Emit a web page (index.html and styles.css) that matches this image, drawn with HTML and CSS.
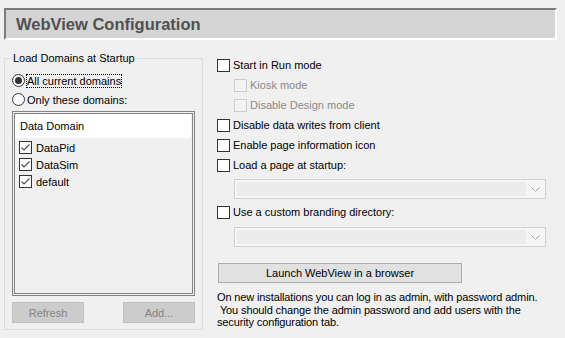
FILE: index.html
```html
<!DOCTYPE html>
<html lang="en">
<head>
    <meta charset="UTF-8">
    <title>WebView Configuration</title>
    <link rel="stylesheet" href="styles.css">
</head>
<body>
    <!-- Title bar -->
    <div class="header">WebView Configuration</div>

    <div class="content">
        <!-- Domains group -->
        <fieldset class="domains">
            <legend>Load Domains at Startup</legend>
            <div class="radio-row">
                <span class="radio checked"></span>
                <span class="focus">All current domains</span>
            </div>
            <div class="radio-row">
                <span class="radio"></span>
                <span>Only these domains:</span>
            </div>
            <div class="domain-list">
                <div class="list-head">Data Domain</div>
                <div class="list-items">
                    <div class="list-item"><span class="check checked"></span>DataPid</div>
                    <div class="list-item"><span class="check checked"></span>DataSim</div>
                    <div class="list-item"><span class="check checked"></span>default</div>
                </div>
            </div>
            <div class="group-buttons">
                <button class="btn-disabled">Refresh</button>
                <button class="btn-disabled">Add...</button>
            </div>
        </fieldset>

        <!-- Options -->
        <div class="options">
            <div class="opt"><span class="check"></span>Start in Run mode</div>
            <div class="opt sub disabled"><span class="check"></span>Kiosk mode</div>
            <div class="opt sub disabled"><span class="check"></span>Disable Design mode</div>
            <div class="opt"><span class="check"></span>Disable data writes from client</div>
            <div class="opt"><span class="check"></span>Enable page information icon</div>
            <div class="opt"><span class="check"></span>Load a page at startup:</div>
            <div class="combo combo-page">
                <span class="combo-field"></span>
                <span class="combo-arrow">
                    <svg width="9" height="5" viewBox="0 0 9 5"><polyline points="0.5,0.5 4.5,4.5 8.5,0.5" fill="none" stroke="#a8a8a8" stroke-width="1"/></svg>
                </span>
            </div>
            <div class="opt opt-brand"><span class="check"></span>Use a custom branding directory:</div>
            <div class="combo combo-brand">
                <span class="combo-field"></span>
                <span class="combo-arrow">
                    <svg width="9" height="5" viewBox="0 0 9 5"><polyline points="0.5,0.5 4.5,4.5 8.5,0.5" fill="none" stroke="#a8a8a8" stroke-width="1"/></svg>
                </span>
            </div>
            <button class="launch">Launch WebView in a browser</button>
            <p class="note">On new installations you can log in as admin, with password admin.<br>&nbsp;You should change the admin password and add users with the<br>security configuration tab.</p>
        </div>
    </div>
</body>
</html>
```

FILE: styles.css
```css
body {
    margin: 0;
    padding: 8px 8px 0 4px;
    background-color: #f0f0f0;
    font-family: "Liberation Sans", Arial, sans-serif;
    font-size: 11px;
    color: #000;
}

/* Title bar */
.header {
    width: 539px;
    height: 28px;
    line-height: 28px;
    padding-left: 10px;
    background-color: #d4d4d4;
    border-top: 2px solid #7c7c7c;
    border-left: 2px solid #7c7c7c;
    border-bottom: 2px solid #fff;
    border-right: 2px solid #fff;
    font-size: 16.5px;
    font-weight: bold;
    color: #505050;
}

.content {
    display: flex;
    align-items: flex-start;
    margin-top: 12px;
}

/* Domains group */
.domains {
    box-sizing: border-box;
    width: 199px;
    margin: 0;
    padding: 6px 7px 6px 7px;
    border: 1px solid #dcdcdc;
}

.domains legend {
    padding: 0 2px;
    margin-left: -1px;
    line-height: 13px;
}

.radio-row {
    display: flex;
    align-items: center;
    height: 19px;
    gap: 2px;
}

.radio {
    box-sizing: border-box;
    width: 13px;
    height: 13px;
    border: 1px solid #333;
    border-radius: 50%;
    background-color: #fff;
    display: flex;
    align-items: center;
    justify-content: center;
}

.radio.checked::after {
    content: "";
    width: 7px;
    height: 7px;
    border-radius: 50%;
    background-color: #333;
}

.focus {
    outline: 1px dotted #000;
    line-height: 12px;
}

.domain-list {
    box-sizing: border-box;
    height: 185px;
    margin-top: 2px;
    border: 3px double #848484;
}

.list-head {
    height: 24px;
    line-height: 24px;
    padding-left: 5px;
    margin-right: 1px;
    background-color: #fff;
}

.list-items {
    padding-top: 1px;
}

.list-item {
    display: flex;
    align-items: center;
    gap: 4px;
    height: 17px;
    padding-left: 4px;
}

.group-buttons {
    display: flex;
    justify-content: space-between;
    margin-top: 6px;
}

.btn-disabled {
    width: 72px;
    height: 21px;
    padding: 0;
    background-color: #cccccc;
    border: 1px solid #bfbfbf;
    font-family: inherit;
    font-size: 11px;
    color: #838383;
}

/* Check boxes */
.check {
    box-sizing: border-box;
    flex: none;
    width: 13px;
    height: 13px;
    border: 1px solid #333;
    background-color: #fff;
}

.check.checked {
    background: #fff url("data:image/svg+xml;utf8,<svg xmlns='http://www.w3.org/2000/svg' width='11' height='11'><polyline points='1.5,5.5 4,8 9.5,2.5' fill='none' stroke='%23505050' stroke-width='1.2'/></svg>") no-repeat center;
}

/* Options */
.options {
    margin-left: 14px;
    padding-top: 3px;
    width: 340px;
}

.opt {
    display: flex;
    align-items: center;
    gap: 3px;
    height: 20px;
}

.opt.sub {
    padding-left: 17px;
}

.opt.disabled {
    color: #8a8a8a;
}

.opt.disabled .check {
    border-color: #cccccc;
    background-color: #f3f3f3;
}

.combo {
    box-sizing: border-box;
    display: flex;
    width: 312px;
    height: 20px;
    margin-left: 17px;
    border: 1px solid #d0d0d0;
    background-color: #f6f6f6;
}

.combo-page {
    margin-top: 4px;
}

.opt-brand {
    margin-top: 3px;
}

.combo-brand {
    margin-top: 5px;
}

.combo-field {
    flex: 1;
    margin: 2px 0 2px 2px;
    background-color: #ececec;
}

.combo-arrow {
    width: 19px;
    display: flex;
    align-items: center;
    justify-content: center;
}

.launch {
    display: block;
    width: 244px;
    height: 20px;
    margin: 16px 0 0 1px;
    padding: 0;
    background-color: #e1e1e1;
    border: 1px solid #adadad;
    font-family: inherit;
    font-size: 11px;
    color: #000;
}

.note {
    margin: 8px 0 0 0;
    line-height: 12.5px;
    letter-spacing: -0.13px;
    white-space: nowrap;
}
```
